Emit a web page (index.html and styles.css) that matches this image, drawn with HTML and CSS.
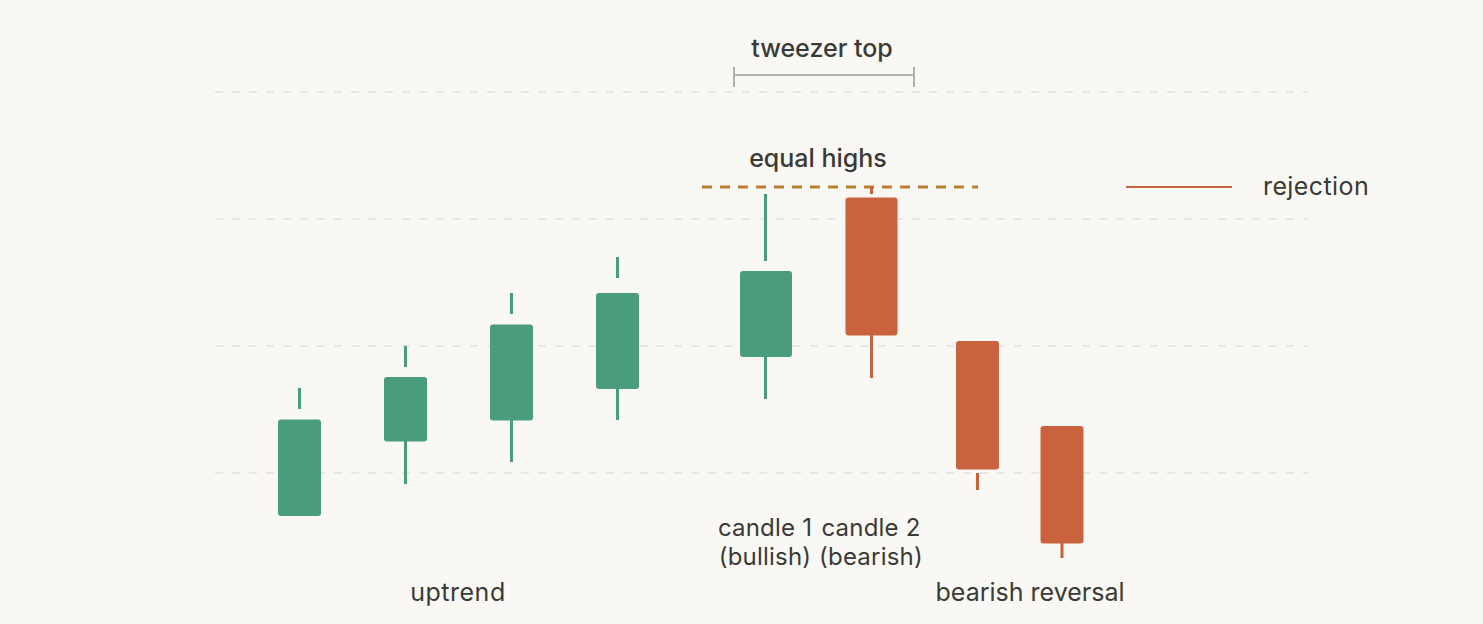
FILE: index.html
```html
<!DOCTYPE html>
<html lang="en">
<head>
<meta charset="utf-8">
<title>Tweezer top</title>
<link rel="stylesheet" href="styles.css">
</head>
<body>
<main class="canvas">
<svg class="chart" width="1483" height="624" viewBox="0 0 1483 624" xmlns="http://www.w3.org/2000/svg">
  <g class="grid">
    <line x1="215" y1="92" x2="1308" y2="92"/>
    <line x1="215" y1="219" x2="1308" y2="219"/>
    <line x1="215" y1="346" x2="1308" y2="346"/>
    <line x1="215" y1="473" x2="1308" y2="473"/>
  </g>

  <text class="label strong" x="822" y="57">tweezer top</text>
  <g class="bracket">
    <line x1="734" y1="75" x2="914" y2="75"/>
    <line x1="734" y1="67" x2="734" y2="87"/>
    <line x1="914" y1="67" x2="914" y2="87"/>
  </g>

  <text class="label strong" x="818" y="167">equal highs</text>
  <line class="equal" x1="702" y1="187" x2="978" y2="187"/>

  <line class="legend-line" x1="1126" y1="187" x2="1232" y2="187"/>
  <text class="label start" x="1263" y="195">rejection</text>

  <g class="bull">
    <rect class="wick" x="298" y="388" width="3" height="21"/>
    <rect x="278" y="419.5" width="43" height="96.5" rx="3"/>

    <rect class="wick" x="404" y="346" width="3" height="21"/>
    <rect x="384" y="377" width="43" height="64.5" rx="3"/>
    <rect class="wick" x="404" y="441" width="3" height="43"/>

    <rect class="wick" x="510" y="293" width="3" height="21"/>
    <rect x="490" y="324.5" width="43" height="96" rx="3"/>
    <rect class="wick" x="510" y="420" width="3" height="42"/>

    <rect class="wick" x="616" y="257" width="3" height="21"/>
    <rect x="596" y="293" width="43" height="96" rx="3"/>
    <rect class="wick" x="616" y="388" width="3" height="32"/>

    <rect class="wick" x="764" y="194" width="3" height="67"/>
    <rect x="740" y="271" width="52" height="86" rx="3"/>
    <rect class="wick" x="764" y="356" width="3" height="43"/>
  </g>

  <g class="bear">
    <rect class="wick" x="870" y="187" width="3" height="7"/>
    <rect x="845.5" y="197.5" width="52" height="138" rx="3"/>
    <rect class="wick" x="870" y="335" width="3" height="43"/>

    <rect x="956" y="341" width="43" height="128.5" rx="3"/>
    <rect class="wick" x="976" y="473" width="3" height="17"/>

    <rect x="1040.5" y="426" width="43" height="117.5" rx="3"/>
    <rect class="wick" x="1060.5" y="543" width="3" height="15"/>
  </g>

  <text class="label compact" x="765" y="535.5">candle 1</text>
  <text class="label compact" x="871" y="535.5">candle 2</text>
  <text class="label compact" x="765" y="565">(bullish)</text>
  <text class="label compact" x="871" y="565">(bearish)</text>

  <text class="label wide" x="458" y="601">uptrend</text>
  <text class="label" x="1030" y="601">bearish reversal</text>
</svg>
</main>
</body>
</html>
```

FILE: styles.css
```css
html, body {
  margin: 0;
  padding: 0;
  background: #f9f8f4;
}

.canvas {
  width: 1483px;
  height: 624px;
  overflow: hidden;
}

.chart {
  display: block;
}

.grid line {
  stroke: #e3e1dc;
  stroke-width: 1.5;
  stroke-dasharray: 8 9;
}

.bracket line {
  stroke: #b3b1ab;
  stroke-width: 2;
}

.equal {
  stroke: #b97d34;
  stroke-width: 3;
  stroke-dasharray: 10 8;
}

.legend-line {
  stroke: #c9643f;
  stroke-width: 2;
}

.bull rect {
  fill: #4a9d7a;
}

.bear rect {
  fill: #c9633d;
}

.label {
  font-family: "Inter", "Noto Sans", sans-serif;
  font-size: 25px;
  fill: #3a3a36;
  text-anchor: middle;
}

.label.compact {
  font-size: 24px;
  letter-spacing: 0.2px;
}

.label.wide {
  letter-spacing: 0.5px;
}

.label.strong {
  font-weight: 500;
}

.label.start {
  text-anchor: start;
  letter-spacing: 0.4px;
}
```
